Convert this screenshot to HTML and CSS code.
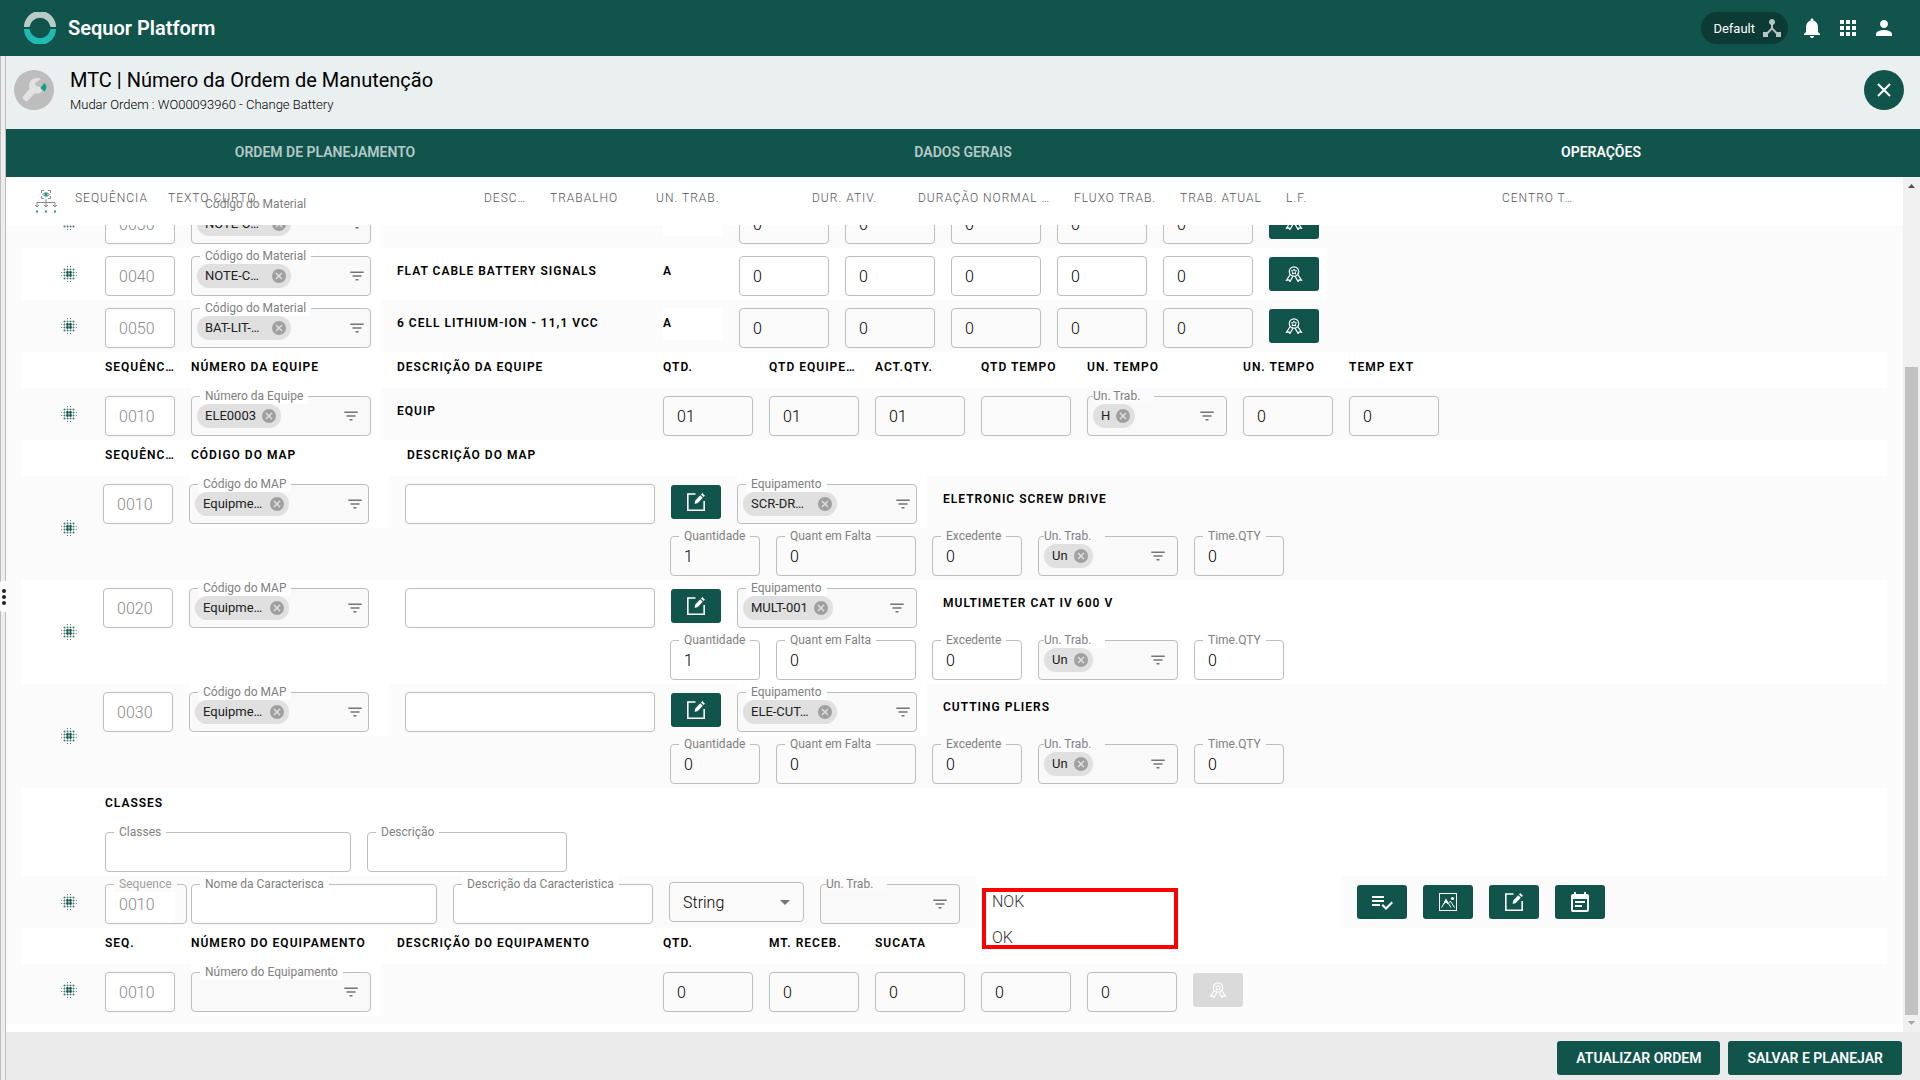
FILE: index.html
```html
<!DOCTYPE html>
<html lang="pt-BR">
<head>
    <meta charset="UTF-8">
    <meta name="viewport" content="width=device-width, initial-scale=1.0">
    <title>Sequor Platform</title>
    <link rel="stylesheet" href="styles.css">
</head>
<body>

<!-- icons -->
<svg class="sprite" aria-hidden="true">
    <symbol id="i-dots" viewBox="0 0 16 16">
        <g fill="none" stroke="#11544c" stroke-linecap="round">
            <path stroke-width="1.200" opacity=".8" stroke-dasharray="0 3" d="M6.500.7h3.100M6.500 15.300h3.100M.7 6.500v3.100M15.300 6.500v3.100"/>
            <path stroke-width="2" opacity=".8" stroke-dasharray="0 3" d="M3.500 3.500h9.100M3.500 12.500h9.100M3.500 6.500v3.100M12.500 6.500v3.100"/>
            <path stroke-width="2.800" stroke-dasharray="0 3" d="M6.500 6.500h3.100M6.500 9.500h3.100"/>
        </g>
    </symbol>
    <symbol id="i-filter" viewBox="0 0 24 24">
        <path fill="#757575" d="M10 18h4v-2h-4v2zM3 6v2h18V6H3zm3 7h12v-2H6v2z"/>
    </symbol>
    <symbol id="i-cancel" viewBox="0 0 24 24">
        <path fill="#a0a0a0" d="M12 0a12 12 0 1 0 0 24 12 12 0 0 0 0-24zm6 16.3L16.3 18 12 13.700 7.700 18 6 16.300 10.300 12 6 7.700 7.700 6 12 10.300 16.300 6 18 7.700 13.700 12z"/>
    </symbol>
    <symbol id="i-ribbon" viewBox="0 0 18 16">
        <g fill="none" stroke="currentColor" stroke-width="1.2">
            <circle cx="9" cy="5.500" r="4.700"/>
            <path d="M5.200 8.500L1.500 14.200l2.400-.2 1 1.600 3-5.400M12.800 8.500l3.700 5.700-2.400-.2-1 1.600-3-5.400"/>
        </g>
        <path fill="none" stroke="currentColor" d="M9 3l.8 1.700 1.800.2-1.300 1.200.3 1.900L9 7.100 7.400 8l.3-1.900-1.300-1.200 1.800-.2z"/>
    </symbol>
    <symbol id="i-edit" viewBox="0 0 18 18">
        <path fill="none" stroke="currentColor" stroke-width="1.600" d="M8.500 1H.8v16.200h16.400V8"/>
        <path fill="currentColor" d="M13.200 2.200l2.600 2.600-5 5.200-3.200.9.700-3.400zM14 1.400l1.300-1.300 2.600 2.600-1.300 1.300z"/>
    </symbol>
    <symbol id="i-check" viewBox="0 0 24 24">
        <path fill="currentColor" d="M14 6H2v2h12V6zm0 4H2v2h12v-2zM2 16h8v-2H2v2zm19.500-4.500L23 13l-6.990 7-4.510-4.500L13 14l3.010 3 5.490-5.500z"/>
    </symbol>
    <symbol id="i-image" viewBox="0 0 18 18">
        <g fill="none" stroke="currentColor">
            <rect x=".5" y=".5" width="17" height="17"/>
            <path d="M2.500 14.500L7 7l5 7.500M9.500 10l1.800-1.800 4.200 6.300M4.500 11L7 9l2 2"/>
        </g>
        <circle cx="13.500" cy="5.500" r="1.600" fill="currentColor"/>
        <path fill="currentColor" d="M7 5.500L9 9H5z"/>
    </symbol>
    <symbol id="i-note" viewBox="0 0 18 20">
        <path fill="currentColor" d="M14 11H4V9h10zM11 15H4v-2h7zM16 2h-1V0h-2v2H5V0H3v2H2a2 2 0 0 0-2 2v14c0 1.100.9 2 2 2h14a2 2 0 0 0 2-2V4a2 2 0 0 0-2-2zm0 16H2V7h14z"/>
    </symbol>
</svg>

<header class="topbar">
    <svg class="logo" width="32" height="32" viewBox="0 0 32 32">
        <path fill="#b7cbc8" d="M0 15a16 16 0 0 1 32 0h-5.500a10.600 10.600 0 0 0-21 0z"/>
        <path fill="#21b9b4" d="M0 17a16 16 0 0 0 32 0h-5.500a10.600 10.600 0 0 1-21 0z"/>
    </svg>
    <span class="brand">Sequor Platform</span>
    <div class="top-actions">
        <button class="env">Default
            <svg width="24" height="24" viewBox="0 0 24 24"><path fill="#b5c5c2" d="M17 16l-4-4V8.820C14.160 8.400 15 7.300 15 6c0-1.660-1.340-3-3-3S9 4.340 9 6c0 1.300.84 2.400 2 2.820V12l-4 4H3v5h5v-3.050l4-4.200 4 4.200V21h5v-5h-4z"/></svg>
        </button>
        <button class="icon-btn" aria-label="Notificações">
            <svg width="24" height="24" viewBox="0 0 24 24"><path fill="#fff" d="M12 22c1.100 0 2-.9 2-2h-4c0 1.100.89 2 2 2zm6-6v-5c0-3.070-1.640-5.640-4.500-6.320V4c0-.83-.67-1.500-1.500-1.500s-1.500.67-1.500 1.500v.68C7.630 5.360 6 7.920 6 11v5l-2 2v1h16v-1l-2-2z"/></svg>
        </button>
        <button class="icon-btn" aria-label="Aplicativos">
            <svg width="24" height="24" viewBox="0 0 24 24"><path fill="#fff" d="M4 8h4V4H4v4zm6 12h4v-4h-4v4zm-6 0h4v-4H4v4zm0-6h4v-4H4v4zm6 0h4v-4h-4v4zm6-10v4h4V4h-4zm-6 4h4V4h-4v4zm6 6h4v-4h-4v4zm0 6h4v-4h-4v4z"/></svg>
        </button>
        <button class="icon-btn" aria-label="Usuário">
            <svg width="24" height="24" viewBox="0 0 24 24"><path fill="#fff" d="M12 12c2.210 0 4-1.790 4-4s-1.790-4-4-4-4 1.790-4 4 1.790 4 4 4zm0 2c-2.670 0-8 1.340-8 4v2h16v-2c0-2.660-5.330-4-8-4z"/></svg>
        </button>
    </div>
</header>

<div class="shell">
    <div class="splitter">
        <div class="grip"><i></i><i></i><i></i></div>
    </div>

    <main class="main">
        <div class="titlebar">
            <svg class="avatar" width="40" height="40" viewBox="0 0 40 40">
                <circle cx="20" cy="20" r="20" fill="#bdbdbd"/>
                <path fill="#e3e3e3" d="M27 9c-4-2-9-1-11 3-1.200 2.200-1 4.500-.3 6.500L9 26.500c-.6.800-.5 1.700.1 2.300l2.200 2.200c.7.600 1.600.5 2.200-.1l7.300-7.600c2.500.6 5 .2 7-1.800l-1.500-4.500-4.300-1-.8-3z"/>
                <path fill="#12a084" d="M26.500 18l4-5c2 2 2.800 5 0 8.500z"/>
            </svg>
            <div class="titles">
                <h1>MTC | Número da Ordem de Manutenção</h1>
                <p>Mudar Ordem : WO00093960 - Change Battery</p>
            </div>
            <button class="close" aria-label="Fechar">
                <svg width="14" height="14" viewBox="0 0 14 14"><path stroke="#fff" stroke-width="2" d="M1 1l12 12M13 1L1 13"/></svg>
            </button>
        </div>

        <nav class="tabs">
            <a href="#planejamento">ORDEM DE PLANEJAMENTO</a>
            <a href="#gerais">DADOS GERAIS</a>
            <a href="#operacoes" class="active">OPERAÇÕES</a>
        </nav>

        <div class="content">
            <div class="sheet">
                <div class="cols">
                    <svg width="22" height="24" viewBox="0 0 22 24">
                        <g fill="none" stroke="#8a8a8a">
                            <path d="M6.500 3V.5H9M13 .5h2.500V3M6.500 6v2.500H9M13 8.500h2.500V6M7.500 4.500q3.500-3.500 7 0q-3.500 3.500-7 0zM11 9v7M2 17v-4.500h18V17M0 15l2 2 2-2M9 15l2 2 2-2M18 15l2 2 2-2"/>
                        </g>
                        <path fill="#12a084" d="M9.500 3h3v3h-3zM1 20.500h2v2H1zM10 20.500h2v2h-2zM19 20.500h2v2h-2z"/>
                    </svg>
                    <span>SEQUÊNCIA</span>
                    <span>TEXTO CURTO</span>
                    <span>DESC…</span>
                    <span>TRABALHO</span>
                    <span>UN. TRAB.</span>
                    <span>DUR. ATIV.</span>
                    <span>DURAÇÃO NORMAL …</span>
                    <span>FLUXO TRAB.</span>
                    <span>TRAB. ATUAL</span>
                    <span>L.F.</span>
                    <span>CENTRO T…</span>
                </div>

                <div class="rows">
                    <!-- materials -->
                    <div class="row first">
                        <div class="mark"><svg width="16" height="16"><use href="#i-dots"/></svg></div>
                        <input class="box seq" value="0030" aria-label="Sequência" disabled>
                        <div class="cell"><div class="field filter w180">
                            <label for="mat30">Código do Material</label>
                            <span class="chip long">NOTE-C…<button aria-label="Remover"><svg><use href="#i-cancel"/></svg></button></span>
                            <input id="mat30"><button class="pick" aria-label="Filtrar"><svg><use href="#i-filter"/></svg></button>
                        </div></div>
                        <div class="text w250"></div>
                        <div class="text unit"></div>
                        <input class="box w90" value="0" aria-label="Dur. Ativ.">
                        <input class="box w90" value="0" aria-label="Duração Normal">
                        <input class="box w90" value="0" aria-label="Fluxo Trab.">
                        <input class="box w90" value="0" aria-label="Trab. Atual">
                        <input class="box w90" value="0" aria-label="L.F.">
                        <button class="act" aria-label="Qualidade"><svg width="18" height="16"><use href="#i-ribbon"/></svg></button>
                    </div>
                    <div class="row short">
                        <div class="mark"><svg width="16" height="16"><use href="#i-dots"/></svg></div>
                        <input class="box seq" value="0040" aria-label="Sequência" disabled>
                        <div class="cell"><div class="field filter w180">
                            <label for="mat40">Código do Material</label>
                            <span class="chip long">NOTE-C…<button aria-label="Remover"><svg><use href="#i-cancel"/></svg></button></span>
                            <input id="mat40"><button class="pick" aria-label="Filtrar"><svg><use href="#i-filter"/></svg></button>
                        </div></div>
                        <div class="text w250">FLAT CABLE BATTERY SIGNALS</div>
                        <div class="text unit">A</div>
                        <input class="box w90" value="0" aria-label="Dur. Ativ.">
                        <input class="box w90" value="0" aria-label="Duração Normal">
                        <input class="box w90" value="0" aria-label="Fluxo Trab.">
                        <input class="box w90" value="0" aria-label="Trab. Atual">
                        <input class="box w90" value="0" aria-label="L.F.">
                        <button class="act" aria-label="Qualidade"><svg width="18" height="16"><use href="#i-ribbon"/></svg></button>
                    </div>
                    <div class="row">
                        <div class="mark"><svg width="16" height="16"><use href="#i-dots"/></svg></div>
                        <input class="box seq" value="0050" aria-label="Sequência" disabled>
                        <div class="cell"><div class="field filter w180">
                            <label for="mat50">Código do Material</label>
                            <span class="chip long">BAT-LIT-…<button aria-label="Remover"><svg><use href="#i-cancel"/></svg></button></span>
                            <input id="mat50"><button class="pick" aria-label="Filtrar"><svg><use href="#i-filter"/></svg></button>
                        </div></div>
                        <div class="text w250">6 CELL LITHIUM-ION - 11,1 VCC</div>
                        <div class="text unit">A</div>
                        <input class="box w90" value="0" aria-label="Dur. Ativ.">
                        <input class="box w90" value="0" aria-label="Duração Normal">
                        <input class="box w90" value="0" aria-label="Fluxo Trab.">
                        <input class="box w90" value="0" aria-label="Trab. Atual">
                        <input class="box w90" value="0" aria-label="L.F.">
                        <button class="act" aria-label="Qualidade"><svg width="18" height="16"><use href="#i-ribbon"/></svg></button>
                    </div>

                    <!-- teams -->
                    <div class="heads">
                        <span class="seq">SEQUÊNC…</span>
                        <span class="w190">NÚMERO DA EQUIPE</span>
                        <span class="w250">DESCRIÇÃO DA EQUIPE</span>
                        <span class="w90">QTD.</span>
                        <span class="w90">QTD EQUIPE…</span>
                        <span class="w90">ACT.QTY.</span>
                        <span class="w90">QTD TEMPO</span>
                        <span class="w140">UN. TEMPO</span>
                        <span class="w90">UN. TEMPO</span>
                        <span class="w90">TEMP EXT</span>
                    </div>
                    <div class="row">
                        <div class="mark"><svg width="16" height="16"><use href="#i-dots"/></svg></div>
                        <input class="box seq" value="0010" aria-label="Sequência" disabled>
                        <div class="cell"><div class="field filter w180">
                            <label for="team">Número da Equipe</label>
                            <span class="chip">ELE0003<button aria-label="Remover"><svg><use href="#i-cancel"/></svg></button></span>
                            <input id="team"><button class="pick" aria-label="Filtrar"><svg><use href="#i-filter"/></svg></button>
                        </div></div>
                        <div class="text w250">EQUIP</div>
                        <input class="box w90" value="01" aria-label="Qtd.">
                        <input class="box w90" value="01" aria-label="Qtd Equipe">
                        <input class="box w90" value="01" aria-label="Act.Qty.">
                        <input class="box w90" value="" aria-label="Qtd Tempo">
                        <div class="field filter tight w140">
                            <label for="teamun">Un. Trab.</label>
                            <span class="chip">H<button aria-label="Remover"><svg><use href="#i-cancel"/></svg></button></span>
                            <input id="teamun"><button class="pick" aria-label="Filtrar"><svg><use href="#i-filter"/></svg></button>
                        </div>
                        <input class="box w90" value="0" aria-label="Un. Tempo">
                        <input class="box w90" value="0" aria-label="Temp Ext">
                    </div>

                    <!-- map -->
                    <div class="heads">
                        <span class="seq">SEQUÊNC…</span>
                        <span class="w200">CÓDIGO DO MAP</span>
                        <span class="w250">DESCRIÇÃO DO MAP</span>
                    </div>
                    <div class="map">
                        <div class="mark"><svg width="16" height="16"><use href="#i-dots"/></svg></div>
                        <div class="lines">
                            <div class="line">
                                <input class="box seq" value="0010" aria-label="Sequência" disabled>
                                <div class="cell w200"><div class="field filter w180">
                                    <label for="map10">Código do MAP</label>
                                    <span class="chip long">Equipme…<button aria-label="Remover"><svg><use href="#i-cancel"/></svg></button></span>
                                    <input id="map10"><button class="pick" aria-label="Filtrar"><svg><use href="#i-filter"/></svg></button>
                                </div></div>
                                <input class="box white w250" aria-label="Descrição do MAP">
                                <button class="act" aria-label="Editar"><svg width="18" height="18"><use href="#i-edit"/></svg></button>
                                <div class="cell"><div class="field filter w180">
                                    <label for="eq10">Equipamento</label>
                                    <span class="chip long">SCR-DR…<button aria-label="Remover"><svg><use href="#i-cancel"/></svg></button></span>
                                    <input id="eq10"><button class="pick" aria-label="Filtrar"><svg><use href="#i-filter"/></svg></button>
                                </div></div>
                                <div class="text">ELETRONIC SCREW DRIVE</div>
                            </div>
                            <div class="line sub">
                                <label class="field w90"><span>Quantidade</span><input value="1"></label>
                                <label class="field w140"><span>Quant em Falta</span><input value="0"></label>
                                <label class="field w90"><span>Excedente</span><input value="0"></label>
                                <div class="field filter tight w140">
                                    <label for="un10">Un. Trab.</label>
                                    <span class="chip">Un<button aria-label="Remover"><svg><use href="#i-cancel"/></svg></button></span>
                                    <input id="un10"><button class="pick" aria-label="Filtrar"><svg><use href="#i-filter"/></svg></button>
                                </div>
                                <label class="field w90"><span>Time.QTY</span><input value="0"></label>
                            </div>
                        </div>
                    </div>
                    <div class="map alt">
                        <div class="mark"><svg width="16" height="16"><use href="#i-dots"/></svg></div>
                        <div class="lines">
                            <div class="line">
                                <input class="box seq" value="0020" aria-label="Sequência" disabled>
                                <div class="cell w200"><div class="field filter w180">
                                    <label for="map20">Código do MAP</label>
                                    <span class="chip long">Equipme…<button aria-label="Remover"><svg><use href="#i-cancel"/></svg></button></span>
                                    <input id="map20"><button class="pick" aria-label="Filtrar"><svg><use href="#i-filter"/></svg></button>
                                </div></div>
                                <input class="box white w250" aria-label="Descrição do MAP">
                                <button class="act" aria-label="Editar"><svg width="18" height="18"><use href="#i-edit"/></svg></button>
                                <div class="cell"><div class="field filter w180">
                                    <label for="eq20">Equipamento</label>
                                    <span class="chip">MULT-001<button aria-label="Remover"><svg><use href="#i-cancel"/></svg></button></span>
                                    <input id="eq20"><button class="pick" aria-label="Filtrar"><svg><use href="#i-filter"/></svg></button>
                                </div></div>
                                <div class="text">MULTIMETER CAT IV 600 V</div>
                            </div>
                            <div class="line sub">
                                <label class="field w90"><span>Quantidade</span><input value="1"></label>
                                <label class="field w140"><span>Quant em Falta</span><input value="0"></label>
                                <label class="field w90"><span>Excedente</span><input value="0"></label>
                                <div class="field filter tight w140">
                                    <label for="un20">Un. Trab.</label>
                                    <span class="chip">Un<button aria-label="Remover"><svg><use href="#i-cancel"/></svg></button></span>
                                    <input id="un20"><button class="pick" aria-label="Filtrar"><svg><use href="#i-filter"/></svg></button>
                                </div>
                                <label class="field w90"><span>Time.QTY</span><input value="0"></label>
                            </div>
                        </div>
                    </div>
                    <div class="map">
                        <div class="mark"><svg width="16" height="16"><use href="#i-dots"/></svg></div>
                        <div class="lines">
                            <div class="line">
                                <input class="box seq" value="0030" aria-label="Sequência" disabled>
                                <div class="cell w200"><div class="field filter w180">
                                    <label for="map30">Código do MAP</label>
                                    <span class="chip long">Equipme…<button aria-label="Remover"><svg><use href="#i-cancel"/></svg></button></span>
                                    <input id="map30"><button class="pick" aria-label="Filtrar"><svg><use href="#i-filter"/></svg></button>
                                </div></div>
                                <input class="box white w250" aria-label="Descrição do MAP">
                                <button class="act" aria-label="Editar"><svg width="18" height="18"><use href="#i-edit"/></svg></button>
                                <div class="cell"><div class="field filter w180">
                                    <label for="eq30">Equipamento</label>
                                    <span class="chip long">ELE-CUT…<button aria-label="Remover"><svg><use href="#i-cancel"/></svg></button></span>
                                    <input id="eq30"><button class="pick" aria-label="Filtrar"><svg><use href="#i-filter"/></svg></button>
                                </div></div>
                                <div class="text">CUTTING PLIERS</div>
                            </div>
                            <div class="line sub">
                                <label class="field w90"><span>Quantidade</span><input value="0"></label>
                                <label class="field w140"><span>Quant em Falta</span><input value="0"></label>
                                <label class="field w90"><span>Excedente</span><input value="0"></label>
                                <div class="field filter tight w140">
                                    <label for="un30">Un. Trab.</label>
                                    <span class="chip">Un<button aria-label="Remover"><svg><use href="#i-cancel"/></svg></button></span>
                                    <input id="un30"><button class="pick" aria-label="Filtrar"><svg><use href="#i-filter"/></svg></button>
                                </div>
                                <label class="field w90"><span>Time.QTY</span><input value="0"></label>
                            </div>
                        </div>
                    </div>

                    <!-- classes -->
                    <div class="heads"><span>CLASSES</span></div>
                    <div class="row alt">
                        <div class="mark"></div>
                        <label class="field white w246"><span>Classes</span><input></label>
                        <label class="field white w200"><span>Descrição</span><input></label>
                    </div>
                    <div class="row chars">
                        <div class="mark"><svg width="16" height="16"><use href="#i-dots"/></svg></div>
                        <label class="field sequence"><span>Sequence</span><input value="0010" disabled></label>
                        <label class="field white w246"><span>Nome da Caracterisca</span><input></label>
                        <label class="field white w200"><span>Descrição da Caracteristica</span><input></label>
                        <div class="type">
                            <select aria-label="Tipo"><option>String</option></select>
                            <svg width="10" height="5" viewBox="0 0 10 5"><path fill="#757575" d="M0 0h10L5 5z"/></svg>
                        </div>
                        <div class="field filter tight w140">
                            <label for="charun">Un. Trab.</label>
                            <input id="charun"><button class="pick" aria-label="Filtrar"><svg><use href="#i-filter"/></svg></button>
                        </div>
                        <div class="options">
                            <ul>
                                <li>NOK</li>
                                <li>OK</li>
                            </ul>
                        </div>
                        <button class="act" aria-label="Validar"><svg width="24" height="24"><use href="#i-check"/></svg></button>
                        <button class="act" aria-label="Imagem"><svg width="18" height="18"><use href="#i-image"/></svg></button>
                        <button class="act" aria-label="Editar"><svg width="18" height="18"><use href="#i-edit"/></svg></button>
                        <button class="act" aria-label="Notas"><svg width="18" height="20"><use href="#i-note"/></svg></button>
                    </div>

                    <!-- equipment -->
                    <div class="heads">
                        <span class="seq">SEQ.</span>
                        <span class="w190">NÚMERO DO EQUIPAMENTO</span>
                        <span class="w250">DESCRIÇÃO DO EQUIPAMENTO</span>
                        <span class="w90">QTD.</span>
                        <span class="w90">MT. RECEB.</span>
                        <span class="w90">SUCATA</span>
                    </div>
                    <div class="row">
                        <div class="mark"><svg width="16" height="16"><use href="#i-dots"/></svg></div>
                        <input class="box seq" value="0010" aria-label="Sequência" disabled>
                        <div class="cell"><div class="field filter w180">
                            <label for="equip">Número do Equipamento</label>
                            <input id="equip"><button class="pick" aria-label="Filtrar"><svg><use href="#i-filter"/></svg></button>
                        </div></div>
                        <div class="text w250"></div>
                        <input class="box w90" value="0" aria-label="Qtd.">
                        <input class="box w90" value="0" aria-label="Mt. Receb.">
                        <input class="box w90" value="0" aria-label="Sucata">
                        <input class="box w90" value="0" aria-label="Saldo">
                        <input class="box w90" value="0" aria-label="Total">
                        <button class="act" aria-label="Qualidade" disabled><svg width="18" height="16"><use href="#i-ribbon"/></svg></button>
                    </div>
                </div>
            </div>

            <div class="scrollbar">
                <svg width="17" height="17" viewBox="0 0 17 17"><path fill="#505050" d="M5 11h7L8.500 7z"/></svg>
                <div class="track"></div>
                <div class="thumb"></div>
                <svg width="17" height="17" viewBox="0 0 17 17"><path fill="#a3a3a3" d="M5 6h7l-3.500 4z"/></svg>
            </div>
        </div>

        <footer class="footer">
            <button>ATUALIZAR ORDEM</button>
            <button>SALVAR E PLANEJAR</button>
        </footer>
    </main>
</div>

</body>
</html>
```
FILE: styles.css
```css
* {
    box-sizing: border-box;
}

body {
    margin: 0;
    height: 100vh;
    display: flex;
    flex-direction: column;
    overflow: hidden;
    font-family: Roboto, "Liberation Sans", sans-serif;
    font-size: 12px;
    line-height: 16px;
    color: #000;
    background: #fff;
}

button,
input,
select {
    font-family: inherit;
    margin: 0;
    padding: 0;
    border: 0;
    background: none;
}

button {
    cursor: pointer;
}

svg {
    display: block;
}

.sprite {
    position: absolute;
    width: 0;
    height: 0;
}

/* top bar */
.topbar {
    flex: none;
    height: 56px;
    padding: 0 24px;
    display: flex;
    align-items: center;
    background: #11544c;
    color: #fff;
}

.brand {
    margin-left: 12px;
    font-size: 20px;
    line-height: 24px;
    font-weight: 600;
}

.top-actions {
    margin-left: auto;
    display: flex;
    align-items: center;
    gap: 12px;
}

.env {
    height: 32px;
    padding: 0 4px 0 12px;
    display: flex;
    align-items: center;
    gap: 5px;
    border-radius: 16px;
    background: #0c3a35;
    color: #fff;
    font-size: 13px;
}

/* splitter */
.shell {
    flex: 1;
    min-height: 0;
    display: flex;
}

.splitter {
    flex: none;
    width: 6px;
    position: relative;
    background: #eee;
    border-left: 1px solid #bdbdbd;
    border-right: 1px solid #bdbdbd;
}

.grip {
    position: absolute;
    left: -1px;
    top: 525px;
    width: 8px;
    height: 31px;
    z-index: 3;
    display: flex;
    flex-direction: column;
    align-items: center;
    justify-content: center;
    gap: 2px;
    background: #fff;
    border-radius: 2px;
}

.grip i {
    width: 4px;
    height: 4px;
    border-radius: 2px;
    background: #222;
}

.main {
    flex: 1;
    min-width: 0;
    display: flex;
    flex-direction: column;
}

/* title */
.titlebar {
    flex: none;
    height: 73px;
    padding: 14px 16px 0 8px;
    display: flex;
    align-items: flex-start;
    background: #eaf0f0;
}

.titles {
    margin-left: 16px;
}

.titles h1 {
    margin: -2px 0 5px;
    font-size: 20px;
    line-height: 24px;
    font-weight: 400;
}

.titles p {
    margin: 0;
    font-size: 13px;
    font-weight: 300;
}

.close {
    width: 40px;
    height: 40px;
    margin-left: auto;
    display: flex;
    align-items: center;
    justify-content: center;
    border-radius: 50%;
    background: #11544c;
}

/* tabs */
.tabs {
    flex: none;
    height: 48px;
    display: flex;
    background: #11544c;
}

.tabs a {
    flex: 1;
    display: flex;
    align-items: center;
    justify-content: center;
    padding-bottom: 2px;
    color: rgba(255, 255, 255, 0.7);
    font-size: 14px;
    font-weight: 600;
    text-decoration: none;
}

.tabs a.active {
    color: #fff;
}

/* content */
.content {
    flex: 1;
    min-height: 0;
    display: flex;
}

.sheet {
    flex: 1;
    min-width: 0;
    overflow: hidden;
}

.cols {
    position: relative;
    z-index: 1;
    height: 48px;
    padding: 13px 0 0 29px;
    display: grid;
    grid-template-columns: 40px 93px 316px 66px 106px 156px 106px 156px 106px 106px 216px 1fr;
    background: #fff;
    color: #555;
    font-weight: 300;
    letter-spacing: 1px;
    white-space: nowrap;
}

.rows {
    margin-top: -29px;
    padding: 0 16px 8px;
    background: #fbfbfb;
}

.row,
.line {
    display: flex;
    align-items: flex-start;
    gap: 16px;
    height: 52px;
    padding-top: 8px;
}

.row .mark {
    width: 67px;
    padding: 10px 0 0 39px;
}

.mark,
.box,
.field,
.cell,
.text,
.type,
.act {
    flex: none;
}

.row.short {
    width: 1305px;
    background: #fff;
}

.alt {
    background: #fff;
}

.heads {
    height: 36px;
    padding: 7px 0 0 83px;
    display: flex;
    gap: 16px;
    background: #fff;
    font-weight: 600;
    letter-spacing: 1px;
    white-space: nowrap;
}

.seq { width: 70px; }
.w90 { width: 90px; }
.w140 { width: 140px; }
.w180 { width: 180px; }
.w190 { width: 190px; }
.w200 { width: 200px; }
.w246 { width: 246px; }
.w250 { width: 250px; }

.box {
    height: 40px;
    padding: 0 13px;
    border: 1px solid #bdbdbd;
    border-radius: 4px;
    color: #000;
    font-size: 16px;
    font-weight: 300;
}

.seq:disabled,
.sequence input:disabled {
    background: #fff;
    color: #8a8a8a;
}

.white {
    background: #fff;
}

/* outlined field with a floating label */
.field {
    position: relative;
    height: 40px;
    display: flex;
    align-items: center;
    border: 1px solid #bdbdbd;
    border-radius: 4px;
}

.field > input {
    flex: 1;
    min-width: 0;
    height: 100%;
    padding: 0 13px;
    color: #000;
    font-size: 16px;
    font-weight: 300;
}

.field > span:first-child,
.field > label {
    position: absolute;
    left: 8px;
    top: -9px;
    z-index: 2;
    padding: 0 5px;
    background: #fbfbfb;
    color: #808080;
    white-space: nowrap;
}

.field.white > span:first-child,
.alt .field > span:first-child,
.cell .field > label,
.alt .field > label {
    background: #fff;
}

.first .field > label {
    background: none;
}

.field.tight > label {
    left: 5px;
    padding: 0 14px 0 0;
}

.filter {
    padding: 0 10px 0 5px;
    background: #f9f9f9;
}

.filter > input {
    padding: 0;
}

.pick svg {
    width: 18px;
    height: 18px;
}

.chip.long ~ .pick {
    margin-right: -6px;
}

.cell {
    width: 190px;
    height: 52px;
    margin-top: -8px;
    padding-top: 8px;
    background: #fff;
}

.cell.w200 {
    width: 200px;
}

.chip {
    height: 24px;
    padding: 0 5px 0 8px;
    display: flex;
    align-items: center;
    justify-content: space-between;
    gap: 6px;
    border-radius: 12px;
    background: #e0e0e0;
    color: #212121;
    font-size: 13px;
}

.chip.long {
    width: 94px;
}

.chip svg {
    width: 14px;
    height: 14px;
}

.text {
    font-weight: 600;
    line-height: 30px;
    letter-spacing: 1px;
    white-space: nowrap;
}

.unit {
    width: 60px;
    height: 32px;
    background: #fff;
}

.act {
    width: 50px;
    height: 34px;
    margin-top: 1px;
    display: flex;
    align-items: center;
    justify-content: center;
    border-radius: 3px;
    background: #11544c;
    color: #fff;
}

.act:disabled {
    background: #dadada;
}

/* map rows */
.map {
    display: flex;
    height: 104px;
}

.map .mark {
    width: 81px;
    padding: 44px 0 0 39px;
}

.line.sub {
    padding-left: 567px;
}

/* characteristics */
.chars {
    position: relative;
}

.sequence {
    width: 82px;
    margin-right: -12px;
}

.sequence input {
    margin-right: 11px;
    border-radius: 4px;
}

.field.sequence > input {
    padding-right: 0;
}

.field.sequence > span {
    color: #a0a0a0;
}

.type {
    position: relative;
    width: 135px;
    margin-top: -2px;
}

.type select {
    width: 100%;
    height: 40px;
    padding: 0 13px;
    appearance: none;
    border: 1px solid #bdbdbd;
    border-radius: 4px;
    color: #000;
    font-size: 16px;
    font-weight: 300;
}

.type svg {
    position: absolute;
    right: 14px;
    top: 18px;
}

.options {
    width: 365px;
    height: 52px;
    margin-top: -8px;
    padding: 12px 0 0 6px;
    background: #fff;
}

/* the open list hangs over the next row */
.options ul {
    position: absolute;
    width: 196px;
    height: 61px;
    margin: 0;
    padding: 0 6px;
    overflow: hidden;
    border: 4px solid #f00;
    background: #fff;
    list-style: none;
    color: #333;
    font-size: 16px;
    font-weight: 300;
}

.options li {
    height: 36px;
    line-height: 20px;
}

/* scrollbar */
.scrollbar {
    flex: none;
    width: 17px;
    display: flex;
    flex-direction: column;
    background: #f0f0f0;
}

.track {
    flex: 173;
}

.thumb {
    flex: 648;
    margin: 0 2px;
    background: #c1c1c1;
}

/* footer */
.footer {
    flex: none;
    height: 48px;
    padding: 4px 18px 0;
    display: flex;
    align-items: center;
    justify-content: flex-end;
    gap: 8px;
    background: #ebebeb;
}

.footer button {
    height: 34px;
    padding: 0 19px;
    border-radius: 3px;
    background: #11544c;
    color: #fff;
    font-size: 14px;
    font-weight: 600;
}
```
